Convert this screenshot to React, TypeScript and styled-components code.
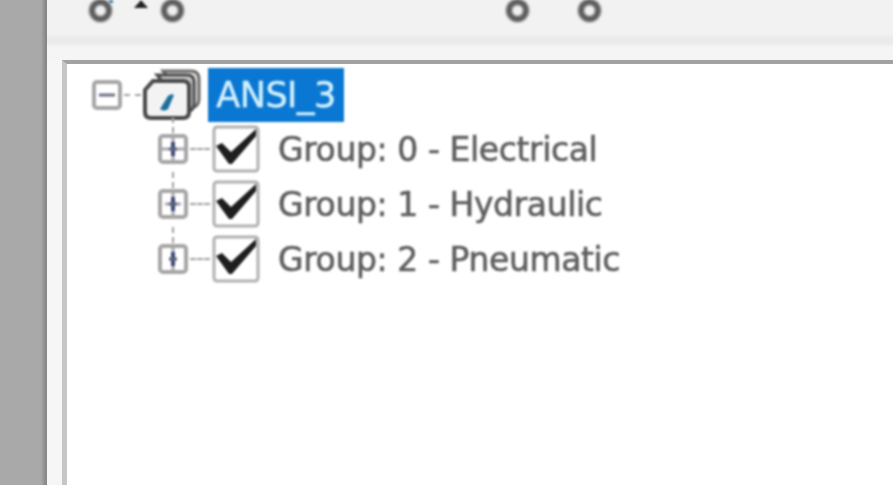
import styled, { createGlobalStyle } from 'styled-components'

// arm is how far the light cross reaches out from the middle of the box
const groups = [
  { label: 'Group: 0 - Electrical', arm: 11 },
  { label: 'Group: 1 - Hydraulic', arm: 8 },
  { label: 'Group: 2 - Pneumatic', arm: 4 },
]

const GlobalStyle = createGlobalStyle`
  html, body {
    margin: 0;
    padding: 0;
    width: 893px;
    height: 485px;
    overflow: hidden;
    background: #fff;
  }
`

const ExpandIcon: React.FC<{ open?: boolean; arm?: number }> = ({ open, arm = 11 }) => (
  <svg width="30" height="30" viewBox="0 0 30 30">
    <rect x="2" y="2" width="26" height="26" rx="3" fill="#fff" stroke="#a6a6a6" strokeWidth="4" />
    {open ? (
      <path d="M7 15h16" stroke="#6b7086" strokeWidth="3" />
    ) : (
      <>
        <path d={`M${15 - arm} 15h${arm * 2}M15 4v22`} stroke="#a8a8b2" strokeWidth="3" />
        <path d="M15 8v14" stroke="#3f4a72" strokeWidth="4" />
        <path d="M11 15h8" stroke="#5d6480" strokeWidth="3" />
      </>
    )}
  </svg>
)

const CheckIcon = () => (
  <svg width="48" height="48" viewBox="0 0 48 48">
    <rect x="2" y="2" width="44" height="44" rx="3" fill="#fff" stroke="#b0b0b0" strokeWidth="3" />
    <path d="M4 21l6-3 9 9L44 4v7L20 39h-3z" fill="#1e1e1e" />
  </svg>
)

const LayerIcon = () => (
  <svg width="58" height="52" viewBox="0 0 58 52">
    <path d="M20 2h28q8 0 8 8v20q0 7-7 9z" fill="#dedede" stroke="#6a6a6a" strokeWidth="3" />
    <path d="M14 6h30q7 0 7 7v22q0 6-6 8z" fill="#c8c8c8" stroke="#4c4c4c" strokeWidth="3" />
    <path d="M10 12h30q6 0 6 6v25q0 6-6 6H8q-6 0-6-6V21z" fill="#f3f3f3" stroke="#4a4a4a" strokeWidth="4" />
    <path d="M17 40l8-13q3-3 6-1l-6 14q-4 3-8 0z" fill="#1f6f9c" />
  </svg>
)

const App = () => {
  return (
    <Page>
      <GlobalStyle />
      <SideStrip />
      <Main>
        <Toolbar>
          <Handle $gap={42} />
          <Tick />
          <Arrow />
          <Handle $gap={13} />
          <Handle $gap={323} />
          <Handle $gap={50} />
        </Toolbar>
        <TreeBox>
          <RootRow>
            <ExpandIcon open />
            <Dash $width={17} />
            <LayerIcon />
            <RootLabel>ANSI_3</RootLabel>
          </RootRow>
          <GroupList>
            {groups.map((group) => (
              <GroupRow key={group.label}>
                <Trunk />
                <ExpandIcon arm={group.arm} />
                <Dash $width={20} />
                <CheckIcon />
                <GroupLabel>{group.label}</GroupLabel>
              </GroupRow>
            ))}
          </GroupList>
        </TreeBox>
      </Main>
    </Page>
  )
}

const Page = styled.div`
  display: flex;
  width: 893px;
  height: 485px;
  overflow: hidden;
  font-family: "DejaVu Sans", sans-serif;
`

const SideStrip = styled.div`
  width: 47px;
  flex-shrink: 0;
  background: linear-gradient(to right, #a9a9a9 0, #a9a9a9 41px, #858585 46px, #8a8a8a 47px);
`

const Main = styled.div`
  flex: 1;
  display: flex;
  flex-direction: column;
  background: #f6f6f6;
  padding-left: 15px;
`

const Toolbar = styled.div`
  height: 60px;
  flex-shrink: 0;
  margin-left: -15px;
  display: flex;
  align-items: flex-start;
  box-sizing: border-box;
  background: linear-gradient(to bottom, #f2f2f2 0, #f2f2f2 34px, #ebebeb 38px, #ebebeb 43px, #f5f5f5 47px);
`

const Handle = styled.span<{ $gap: number }>`
  width: 23px;
  height: 23px;
  margin-top: -1px;
  margin-left: ${(p) => p.$gap}px;
  margin-right: -1px;
  box-sizing: border-box;
  border: 6px solid #5c5c5c;
  border-radius: 50%;
  background: #f0f0f0;
  flex-shrink: 0;
  filter: blur(1.4px);
`

const Tick = styled.span`
  width: 4px;
  height: 3px;
  margin-left: -2px;
  background: #4a7fa0;
  filter: blur(1px);
`

const Arrow = styled.span`
  width: 0;
  height: 0;
  margin-left: 21px;
  border-left: 7px solid transparent;
  border-right: 7px solid transparent;
  border-bottom: 8px solid #222;
  filter: blur(0.8px);
`

const TreeBox = styled.div`
  flex: 1;
  box-sizing: border-box;
  background: #fff;
  border-top: 4px solid #a2a2a2;
  border-left: 5px solid #c6c6c6;
  padding: 3px 0 0 25px;
`

const RootRow = styled.div`
  display: flex;
  align-items: center;
  height: 56px;
  filter: blur(1.1px);
`

const Dash = styled.span<{ $width: number }>`
  width: ${(p) => p.$width}px;
  margin: 0 2px;
  border-top: 2px dashed #a0a0a0;
`

const RootLabel = styled.span`
  margin-left: 7px;
  width: 136px;
  height: 54px;
  line-height: 55px;
  text-align: center;
  background: #0a78d2;
  color: #d2effd;
  font-size: 35px;
  letter-spacing: -0.5px;
  white-space: nowrap;
  -webkit-text-stroke: 0.5px #d2effd;
`

const GroupList = styled.div`
  display: flex;
  flex-direction: column;
  margin-top: -2px;
  padding-left: 66px;
  filter: blur(1.1px);
`

const GroupRow = styled.div`
  position: relative;
  display: flex;
  align-items: center;
  height: 55px;
`

const Trunk = styled.span`
  position: absolute;
  left: 14px;
  top: -4px;
  height: 16px;
  border-left: 2px dashed #a0a0a0;
`

const GroupLabel = styled.span`
  margin-left: 18px;
  margin-top: 1px;
  color: #5e5e5e;
  font-size: 33px;
  letter-spacing: -0.4px;
  white-space: nowrap;
  -webkit-text-stroke: 0.6px #5e5e5e;
`

export default App
